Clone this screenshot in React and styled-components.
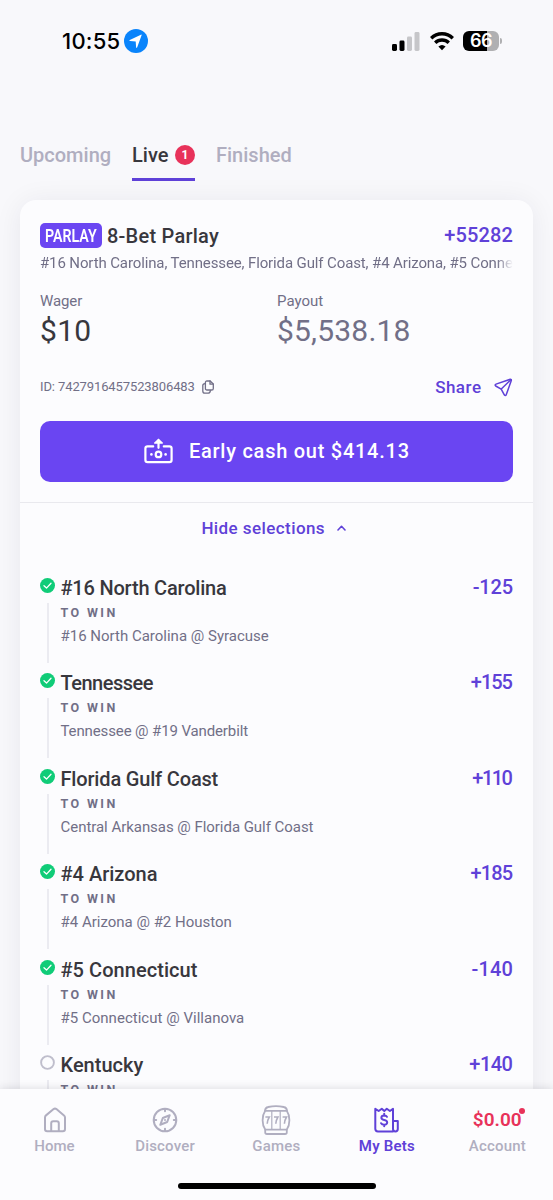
import React from "react";
import styled, { createGlobalStyle } from "styled-components";

const PURPLE = "#5f41d8";
const MUTED = "#716f87";
const PALE = "#b0aec0";
const DARK = "#38373d";
const RED = "#e8325a";

const Global = createGlobalStyle`
  * { box-sizing: border-box; }
  body { margin: 0; background: #f8f8fb; font-family: Roboto, "Liberation Sans", sans-serif; }
`;

const Screen = styled.div`
  position: relative;
  width: 553px;
  height: 1200px;
  overflow: hidden;
  display: flex;
  flex-direction: column;
  background: #f8f8fb;
`;

const Text = styled.span`
  display: block;
  white-space: nowrap;
  font-size: ${(p) => p.$size || 15}px;
  line-height: ${(p) => p.$lh || 20}px;
  font-weight: ${(p) => p.$weight || 400};
  letter-spacing: ${(p) => p.$ls || 0}px;
  margin-right: ${(p) => -(p.$ls || 0)}px;
  color: ${(p) => p.$color || MUTED};
`;

const StatusBar = styled.header`
  height: 82px;
  flex: none;
  display: flex;
  align-items: center;
  justify-content: space-between;
  padding: 0 51px 0 62px;
`;

const StatusGroup = styled.div`
  display: flex;
  align-items: center;
  gap: ${(p) => p.$gap}px;
`;

const Clock = styled(Text)`
  font-family: Inter, "Liberation Sans", sans-serif;
`;

const Tabs = styled.nav`
  margin-top: 58px;
  height: 41px;
  flex: none;
  padding-left: 20px;
  display: flex;
  gap: 21px;
`;

const Tab = styled.div`
  height: 41px;
  width: ${(p) => p.$w}px;
  display: flex;
  align-items: flex-start;
  justify-content: space-between;
  padding-top: 5px;
  border-bottom: 3px solid ${(p) => (p.$active ? PURPLE : "transparent")};
`;

const CountBadge = styled.span`
  width: 20px;
  height: 20px;
  border-radius: 50%;
  background: ${RED};
  color: #fff;
  font-size: 12px;
  font-weight: 700;
  line-height: 20px;
  text-align: center;
`;

const Card = styled.main`
  margin: 19px 20px 0;
  height: 1000px;
  flex: none;
  border-radius: 16px;
  background: #fcfcfe;
  box-shadow: 0 2px 28px rgba(30, 30, 50, 0.07);
`;

const Summary = styled.section`
  height: 303px;
  padding: 23px 20px 0;
  display: flex;
  flex-direction: column;
  border-bottom: 1px solid #e9e9ee;
`;

const Row = styled.div`
  display: flex;
  align-items: center;
  justify-content: space-between;
  height: ${(p) => p.$h}px;
  margin-top: ${(p) => p.$mt || 0}px;
`;

const Title = styled.div`
  display: flex;
  align-items: center;
  gap: 5px;
`;

const Tag = styled.span`
  width: 62px;
  height: 25px;
  border-radius: 5px;
  background: #6b46f2;
  display: flex;
  align-items: center;
  justify-content: center;
`;

const TagLabel = styled.span`
  color: #fff;
  font-size: 18px;
  font-weight: 600;
  line-height: 25px;
  transform: scaleX(0.79);
`;

const Odds = styled(Text)`
  padding-bottom: 2px;
`;

const Legs = styled.div`
  margin-top: 5px;
  height: 20px;
  overflow: hidden;
  mask-image: linear-gradient(to right, #000 calc(100% - 16px), transparent 100%);
`;

const Amounts = styled.div`
  margin-top: 18px;
  display: grid;
  grid-template-columns: 237px 1fr;
`;

const IdGroup = styled.div`
  display: flex;
  align-items: center;
  gap: 7px;
`;

const ShareLink = styled.div`
  display: flex;
  align-items: center;
  gap: 13px;
`;

const CashOut = styled.button`
  margin-top: 9px;
  height: 61px;
  flex: none;
  border: 0;
  border-radius: 10px;
  background: #6a45f2;
  display: flex;
  align-items: center;
  justify-content: center;
  gap: 16px;
  padding: 0 0 1px 0;
  font-family: inherit;
`;

const Toggle = styled.div`
  height: 52px;
  display: flex;
  align-items: center;
  justify-content: center;
  gap: 12px;
  padding: 0 6px 2px 0;
`;

const Selections = styled.section`
  padding: 21px 20px 0;
`;

const Leg = styled.article`
  height: 95.4px;
  display: grid;
  grid-template-columns: 15px 1fr auto;
  column-gap: 5px;
`;

const Rail = styled.div`
  display: flex;
  flex-direction: column;
  align-items: center;
  gap: 10px;
  padding-top: 2px;
`;

const RailLine = styled.span`
  width: 2px;
  height: 60px;
  background: #ebebf1;
`;

const LegBody = styled.div`
  padding-left: 0.5px;
`;

const MarketName = styled(Text)`
  margin: 5px 0 6px;
`;

const BottomNav = styled.footer`
  position: absolute;
  left: 0;
  right: 0;
  bottom: 0;
  height: 111px;
  background: #fcfcfe;
  box-shadow: 0 -1px 8px rgba(30, 30, 50, 0.13);
  display: flex;
  flex-direction: column;
  align-items: center;
`;

const NavItems = styled.div`
  align-self: stretch;
  height: 94px;
  display: grid;
  grid-template-columns: 109px 112px repeat(3, 110.5px);
`;

const NavItem = styled.div`
  padding-top: 14px;
  display: flex;
  flex-direction: column;
  align-items: center;
`;

const NavIcon = styled.div`
  position: relative;
  height: 33px;
  display: flex;
  align-items: center;
`;

const AlertDot = styled.i`
  position: absolute;
  right: -3px;
  top: 5px;
  width: 6px;
  height: 6px;
  border-radius: 50%;
  background: ${RED};
`;

const HomeBar = styled.div`
  width: 198px;
  height: 6px;
  border-radius: 3px;
  background: #000;
`;

const Battery = styled.div`
  display: flex;
  align-items: center;
  gap: 1px;
`;

const BatteryBody = styled.div`
  width: 36px;
  height: 20px;
  border-radius: 6px;
  background: linear-gradient(to right, #000 67%, #b0b0b2 67%);
  color: #fff;
  font: 600 18px/20px Inter, sans-serif;
  letter-spacing: -0.5px;
  text-align: center;
`;

const BatteryTip = styled.i`
  width: 2px;
  height: 6px;
  border-radius: 0 2px 2px 0;
  background: #b0b0b2;
`;

const stroke = (color, w = 2) => ({
  fill: "none",
  stroke: color,
  strokeWidth: w,
  strokeLinecap: "round",
  strokeLinejoin: "round",
});

const LocationIcon = () => (
  <svg width="24" height="24" viewBox="0 0 24 24">
    <circle cx="12" cy="12" r="12" fill="#0a84fb" />
    <path d="M17.6 6.2 L13.2 18.3 Q12.6 19.6 12.1 18.3 L11.7 12.6 L6.1 12.1 Q4.5 11.7 5.8 10.9 L16.9 5.7 Q17.8 5.3 17.6 6.2Z" fill="#fff" />
  </svg>
);

const SignalIcon = () => (
  <svg width="28" height="19" viewBox="0 0 28 19">
    <rect x="0" y="12" width="5" height="7" rx="1.4" fill="#000" />
    <rect x="7.5" y="8.5" width="5" height="10.5" rx="1.4" fill="#000" />
    <rect x="15" y="4.5" width="5" height="14.5" rx="1.4" fill="#c6c6c9" />
    <rect x="22.5" y="0" width="5" height="19" rx="1.4" fill="#c6c6c9" />
  </svg>
);

const WifiIcon = () => (
  <svg width="24" height="19" viewBox="0 0 24 19">
    <g fill="none" stroke="#000" strokeWidth="3.4">
      <path d="M1.2 6.2 A15.4 15.4 0 0 1 22.8 6.2" />
      <path d="M5.2 10.8 A9.8 9.8 0 0 1 18.8 10.8" />
    </g>
    <path d="M8.4 14.5 Q12 11.5 15.6 14.5 L12 18.2Z" fill="#000" />
  </svg>
);

const CopyIcon = () => (
  <svg width="12" height="14" viewBox="0 0 12 14">
    <g {...stroke(MUTED, 1.3)}>
      <path d="M5 1H8.2L11.3 4V8.4Q11.3 10 9.7 10H5Q3.4 10 3.4 8.4V2.6Q3.4 1 5 1Z" />
      <path d="M8 1V4.2H11.2" />
      <path d="M3 3.6Q0.8 3.8 0.8 5.6V11Q0.8 13.2 3 13.2H6.2Q8 13.2 8.4 10.6" />
    </g>
  </svg>
);

const ShareIcon = () => (
  <svg width="19" height="19" viewBox="0 0 19 19">
    <g {...stroke(PURPLE, 1.5)}>
      <path d="M16.2 1.3L2 6.1Q0.4 6.9 1.7 8L7.2 11.1L10.3 16.8Q11.4 18.3 12.3 16.6L17.3 2.5Q17.5 1.1 16.2 1.3Z" />
      <path d="M7.3 11L16.8 1.7" />
    </g>
  </svg>
);

const CashIcon = () => (
  <svg width="29" height="26" viewBox="0 0 29 26">
    <g {...stroke("#fff", 2.2)}>
      <path d="M9.2 8.4H3.6Q1.4 8.4 1.4 10.6V22Q1.4 24.2 3.6 24.2H25.4Q27.6 24.2 27.6 22V10.6Q27.6 8.4 25.4 8.4H19.8" />
      <path d="M14.5 9.8V2.4" />
      <circle cx="14.5" cy="16.4" r="2.8" />
    </g>
    <path d="M14.5 0.4L19 4.8Q19.2 5.7 18.2 5.7H10.8Q9.8 5.7 10 4.8Z" fill="#fff" />
    <circle cx="7.4" cy="16.4" r="1.3" fill="#fff" />
    <circle cx="21.6" cy="16.4" r="1.3" fill="#fff" />
  </svg>
);

const ChevronIcon = () => (
  <svg width="9" height="6" viewBox="0 0 9 6">
    <path d="M1 5L4.5 1.3L8 5" {...stroke(PURPLE, 1.6)} />
  </svg>
);

const StateIcon = ({ won }) => (
  <svg width="15" height="15" viewBox="0 0 15 15">
    {won ? (
      <>
        <circle cx="7.5" cy="7.5" r="7.5" fill="#10cc78" />
        <path d="M4 7.8L6.5 10.1L11 5.3" {...stroke("#fff", 1.3)} />
      </>
    ) : (
      <circle cx="7.5" cy="7.5" r="6.4" fill="none" stroke="#bfbecc" strokeWidth="1.9" />
    )}
  </svg>
);

const HomeIcon = () => (
  <svg width="24" height="26" viewBox="0 0 24 26">
    <g {...stroke(PALE, 2)}>
      <path d="M2 10.4Q2 9.2 3 8.4L10.6 2.1Q12 1 13.4 2.1L21 8.4Q22 9.2 22 10.4V22Q22 24.3 19.8 24.3H4.2Q2 24.3 2 22Z" />
      <path d="M8.2 24V16.2Q8.2 14.2 10.2 14.2H13.8Q15.8 14.2 15.8 16.2V24" />
    </g>
  </svg>
);

const CompassIcon = () => (
  <svg width="26" height="26" viewBox="0 0 26 26">
    <g {...stroke(PALE, 2)}>
      <circle cx="13" cy="13" r="11.3" />
      <path d="M13 2V4.2M13 21.8V24M2 13H4.2M21.8 13H24" />
      <path d="M17.7 8.2L15.2 15L8.3 17.8L10.8 11Z" />
      <path d="M13 12.9V13.1" />
    </g>
  </svg>
);

const SlotIcon = () => (
  <svg width="30" height="30" viewBox="0 0 30 30">
    <g {...stroke(PALE, 1.8)}>
      <path d="M4 5.6Q4.3 2.6 7.2 2Q15 0.2 22.8 2Q25.7 2.6 26 5.6" />
      <path d="M4.2 5.8H25.8Q28.4 9.6 28.4 15.2Q28.4 20.8 25.8 24.6H4.2Q1.6 20.8 1.6 15.2Q1.6 9.6 4.2 5.8Z" />
      <path d="M10.8 6V24.4M19.2 6V24.4" strokeWidth="1.2" />
      <path d="M4.2 25V27.2Q4.2 29 6 29H24Q25.8 29 25.8 27.2V25" />
    </g>
    <g fill="none" stroke={PALE} strokeWidth="1.6">
      <path d="M4.4 12H8.3Q6.5 15 6.2 18.7M13 12H16.9Q15.1 15 14.8 18.7M21.6 12H25.5Q23.7 15 23.4 18.7" />
    </g>
  </svg>
);

const BetsIcon = () => (
  <svg width="25" height="26" viewBox="0 0 25 26">
    <g {...stroke(PURPLE, 2)}>
      <path d="M19 24.4H4Q1.3 24.4 1.3 21.8V1.8L4.7 4L7.8 1.8L10.3 4L12.8 1.8L15.9 4L19 1.8V22Q19 24.4 21.4 24.4Q23.8 24.4 23.8 22V14H19" />
      <path d="M13 9.8Q12.4 8.5 10.2 8.5Q7.4 8.6 7.4 10.7Q7.4 12.4 10.2 12.9Q13.2 13.5 13.2 15.5Q13.1 17.6 10.3 17.7Q7.9 17.7 7.1 16.2M10.2 6.8V8.5M10.2 17.7V19.3" />
    </g>
  </svg>
);

const LEGS = [
  { team: "#16 North Carolina", odds: "-125", game: "#16 North Carolina @ Syracuse", won: true, ls: [-0.2, -0.2, 0] },
  { team: "Tennessee", odds: "+155", game: "Tennessee @ #19 Vanderbilt", won: true, ls: [-0.5, -1, -0.12] },
  { team: "Florida Gulf Coast", odds: "+110", game: "Central Arkansas @ Florida Gulf Coast", won: true, ls: [-0.17, -1.5, -0.04] },
  { team: "#4 Arizona", odds: "+185", game: "#4 Arizona @ #2 Houston", won: true, ls: [0, -0.9, 0] },
  { team: "#5 Connecticut", odds: "-140", game: "#5 Connecticut @ Villanova", won: true, ls: [0.05, 0.2, 0.02] },
  { team: "Kentucky", odds: "+140", game: "", won: false, ls: [0, -0.5, 0] },
];

export default function App() {
  return (
    <Screen>
      <Global />
      <StatusBar>
        <StatusGroup $gap={4}>
          <Clock $size={22} $lh={26} $weight={500} $color="#000" $ls={0.25}>10:55</Clock>
          <LocationIcon />
        </StatusGroup>
        <StatusGroup $gap={9.5}>
          <SignalIcon />
          <WifiIcon />
          <Battery>
            <BatteryBody>66</BatteryBody>
            <BatteryTip />
          </Battery>
        </StatusGroup>
      </StatusBar>

      <Tabs>
        <Tab $w={91}><Text $size={20} $weight={500} $color={PALE}>Upcoming</Text></Tab>
        <Tab $w={63} $active>
          <Text $size={20} $weight={500} $color={DARK}>Live</Text>
          <CountBadge>1</CountBadge>
        </Tab>
        <Tab $w={77}><Text $size={20} $weight={500} $color={PALE}>Finished</Text></Tab>
      </Tabs>

      <Card>
        <Summary>
          <Row $h={25}>
            <Title>
              <Tag><TagLabel>PARLAY</TagLabel></Tag>
              <Text $size={20} $weight={500} $color={DARK} $ls={0.23}>8-Bet Parlay</Text>
            </Title>
            <Odds $size={20} $weight={500} $color={PURPLE} $ls={0.15}>+55282</Odds>
          </Row>
          <Legs>
            <Text $ls={-0.12}>#16 North Carolina, Tennessee, Florida Gulf Coast, #4 Arizona, #5 Connecticut, Kentucky</Text>
          </Legs>
          <Amounts>
            <div>
              <Text $ls={-0.1}>Wager</Text>
              <Text $size={30} $lh={40} $color={DARK} $ls={0.3}>$10</Text>
            </div>
            <div>
              <Text>Payout</Text>
              <Text $size={30} $lh={40} $ls={0.2}>$5,538.18</Text>
            </div>
          </Amounts>
          <Row $h={50} $mt={11}>
            <IdGroup>
              <Text $size={13} $ls={-0.11}>ID: 7427916457523806483</Text>
              <CopyIcon />
            </IdGroup>
            <ShareLink>
              <Text $size={17} $weight={500} $color={PURPLE} $ls={0.5}>Share</Text>
              <ShareIcon />
            </ShareLink>
          </Row>
          <CashOut>
            <CashIcon />
            <Text $size={20} $weight={500} $color="#fff" $ls={0.74}>Early cash out $414.13</Text>
          </CashOut>
        </Summary>
        <Toggle>
          <Text $size={17} $weight={500} $color={PURPLE} $ls={0.42}>Hide selections</Text>
          <ChevronIcon />
        </Toggle>
        <Selections>
          {LEGS.map((leg) => (
            <Leg key={leg.team}>
              <Rail>
                <StateIcon won={leg.won} />
                <RailLine />
              </Rail>
              <LegBody>
                <Text $size={20} $weight={500} $color={DARK} $lh={24} $ls={leg.ls[0]}>{leg.team}</Text>
                <MarketName $size={12.5} $weight={700} $ls={2.4} $lh={15}>TO WIN</MarketName>
                <Text $ls={leg.ls[2]}>{leg.game}</Text>
              </LegBody>
              <Text $size={20} $weight={500} $color={PURPLE} $lh={22} $ls={leg.ls[1]}>{leg.odds}</Text>
            </Leg>
          ))}
        </Selections>
      </Card>

      <BottomNav>
        <NavItems>
          <NavItem>
            <NavIcon><HomeIcon /></NavIcon>
            <Text $weight={500} $color={PALE}>Home</Text>
          </NavItem>
          <NavItem>
            <NavIcon><CompassIcon /></NavIcon>
            <Text $weight={500} $color={PALE} $ls={0.2}>Discover</Text>
          </NavItem>
          <NavItem>
            <NavIcon><SlotIcon /></NavIcon>
            <Text $weight={500} $color={PALE} $ls={0.2}>Games</Text>
          </NavItem>
          <NavItem>
            <NavIcon><BetsIcon /></NavIcon>
            <Text $weight={600} $color={PURPLE} $ls={0.2}>My Bets</Text>
          </NavItem>
          <NavItem>
            <NavIcon>
              <Text $size={19} $weight={600} $color={RED}>$0.00</Text>
              <AlertDot />
            </NavIcon>
            <Text $weight={500} $color={PALE} $ls={0.2}>Account</Text>
          </NavItem>
        </NavItems>
        <HomeBar />
      </BottomNav>
    </Screen>
  );
}
